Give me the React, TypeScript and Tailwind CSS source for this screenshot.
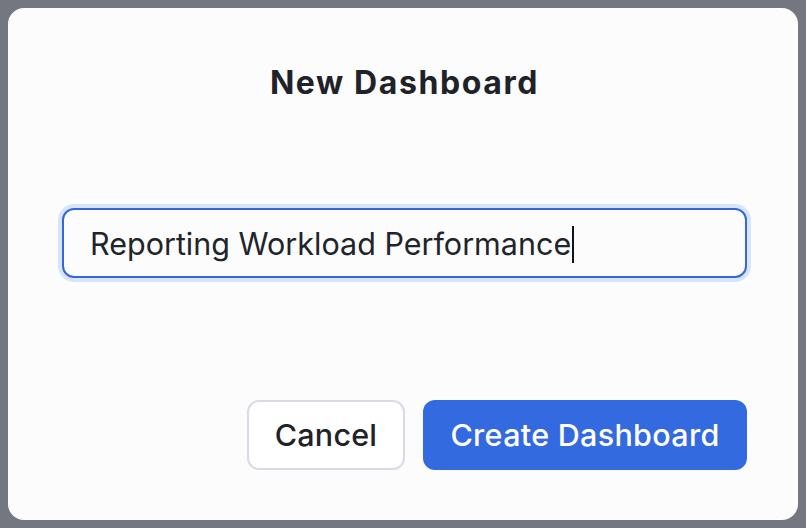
import { useState } from "react";

export default function App() {
  const [name] = useState("Reporting Workload Performance");

  return (
    <div
      className="min-h-screen w-full bg-[#747780] p-2 flex"
      style={{ fontFamily: "Inter, 'Noto Sans', sans-serif" }}
    >
      <div className="flex-1 h-[512px] rounded-2xl bg-[#fcfcfd] flex flex-col pl-[54px] pr-[51px] pt-[56px] pb-[50px]">
        <h2 className="text-center text-[32px] leading-[38px] font-bold text-[#1f2329] tracking-[1.6px]">
          New Dashboard
        </h2>

        {/* champ texte (focus) */}
        <div className="mt-[106px] h-[70px] rounded-xl border-2 border-[#3566db] ring-4 ring-[#d7e4fb] bg-[#fcfcfd] flex items-center px-[26px] pt-[2px]">
          <span className="text-[30.5px] text-[#20242b]">{name}</span>
          <span className="ml-[1px] w-[2px] h-[37px] bg-[#111317]" />
        </div>

        <div className="mt-auto flex justify-end gap-[18px]">
          <button className="h-[70px] w-[158px] rounded-xl border-2 border-[#d7dbe4] bg-white text-[30.5px] font-medium text-[#1f2329] tracking-[0.2px]">
            Cancel
          </button>
          <button className="h-[70px] w-[324px] rounded-xl bg-[#346ae0] text-[30.5px] font-medium text-white tracking-[0.3px]">
            Create Dashboard
          </button>
        </div>
      </div>
    </div>
  );
}
